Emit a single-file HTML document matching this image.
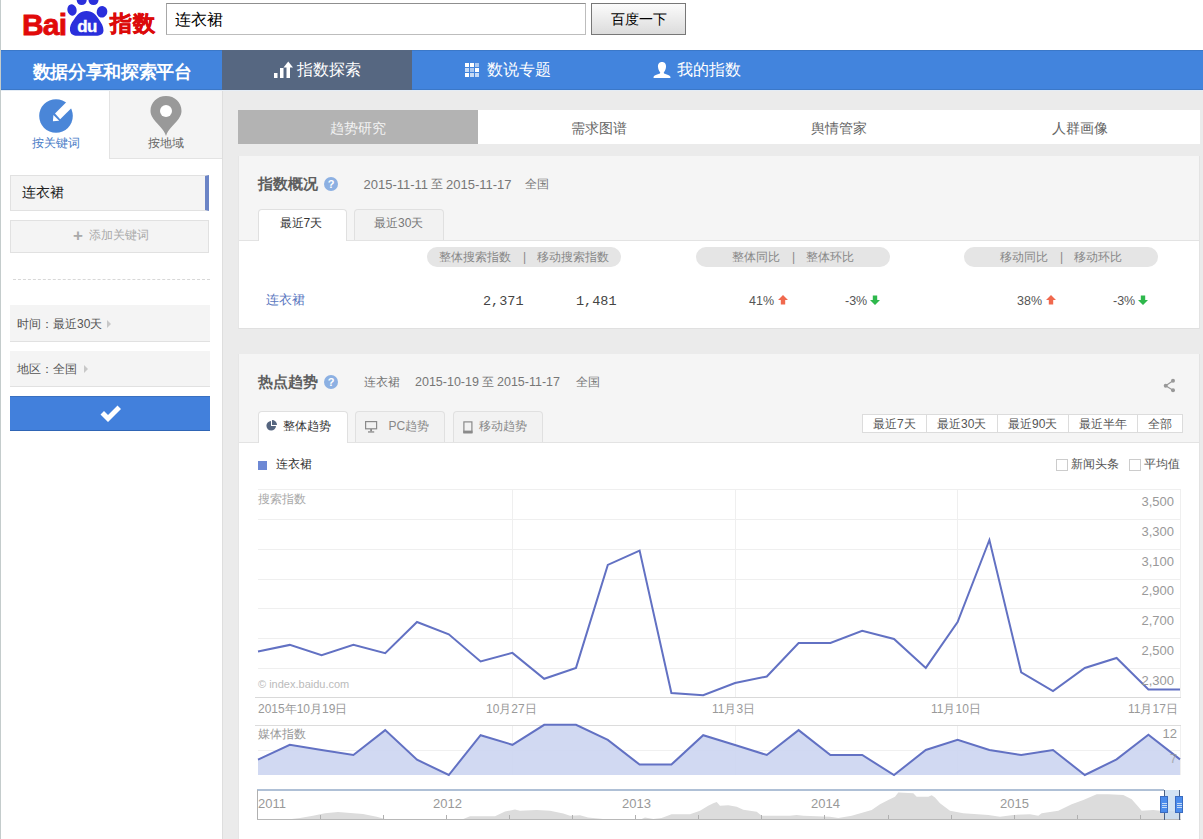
<!DOCTYPE html>
<html><head><meta charset="utf-8">
<style>
*{box-sizing:border-box;margin:0;padding:0}
html,body{width:1203px;height:839px;overflow:hidden;background:#fff;font-family:"Liberation Sans",sans-serif;color:#333}
.a{position:absolute;white-space:nowrap}
.t12{font-size:12px;line-height:14px}
.t13{font-size:13px;line-height:15px}
.t14{font-size:14px;line-height:16px}
.g{color:#999}
</style></head><body>
<!-- page left border -->
<div class="a" style="left:0;top:0;width:1px;height:839px;background:#c4cccc"></div>

<!-- ===== header ===== -->
<svg class="a" style="left:20px;top:0" width="140" height="40" viewBox="0 0 140 40">
  <text x="2" y="35" font-family="Liberation Sans" font-weight="bold" font-size="30" fill="#e10a0a" stroke="#e10a0a" stroke-width="0.8" letter-spacing="-0.8">Bai</text>
  <ellipse cx="52" cy="10" rx="4.6" ry="5.7" fill="#2a2fdc" transform="rotate(-15 52 10)"/>
  <ellipse cx="61.7" cy="0.3" rx="5" ry="4.8" fill="#2a2fdc"/>
  <ellipse cx="73.5" cy="0.3" rx="5" ry="4.8" fill="#2a2fdc"/>
  <ellipse cx="82" cy="11.8" rx="5.3" ry="5.8" fill="#2a2fdc" transform="rotate(15 82 11.8)"/>
  <path d="M66.5 11 C60 11 57 15 54 19.5 C51 23.5 49.5 26.5 50 30.5 C50.5 34.5 53.5 35.7 57 35.7 L76 35.7 C80 35.7 83.5 34.5 83.5 30.5 C83.5 26.5 81.5 23 79 19.5 C76 15 73 11 66.5 11 Z" fill="#2a2fdc"/>
  <text x="55.5" y="32" font-family="Liberation Sans" font-weight="bold" font-size="16.5" fill="#fff" stroke="#fff" stroke-width="0.3" transform="scale(1.03 1)" letter-spacing="-0.6">du</text>
  <text x="90" y="31" font-weight="900" font-size="21.5" fill="#dc0a0a" stroke="#dc0a0a" stroke-width="0.6" letter-spacing="0.5">指数</text>
</svg>
<div class="a" style="left:166px;top:3px;width:420px;height:32px;border:1px solid #bdbdbd;border-top-color:#8f8f8f;border-left-color:#a8a8a8;background:#fff"></div>
<div class="a" style="left:175px;top:9.5px;font-size:16px;line-height:19px;color:#000">连衣裙</div>
<div class="a" style="left:591px;top:3px;width:95px;height:32px;border:1px solid #777;background:linear-gradient(#fbfbfb,#dcdcdc);font-size:14px;text-align:center;line-height:30px;color:#000">百度一下</div>

<!-- ===== nav ===== -->
<div class="a" style="left:1px;top:50px;width:1202px;height:40px;background:#4284dd;border-top:1px solid #3b78c8;border-bottom:1px solid #3b78c8"></div>
<div class="a" style="left:1px;top:90px;width:1202px;height:1px;background:#e4ecf5"></div>
<div class="a" style="left:32.5px;top:61px;font-size:18px;line-height:22px;color:#fff;font-weight:bold;letter-spacing:-0.3px">数据分享和探索平台</div>
<div class="a" style="left:222px;top:50px;width:190px;height:40px;background:#566781"></div>
<svg class="a" style="left:273px;top:60px" width="20" height="19" viewBox="0 0 20 19">
  <rect x="1" y="13" width="3.5" height="5" fill="#fff"/>
  <rect x="7" y="8" width="3.5" height="10" fill="#fff"/>
  <rect x="13.5" y="6" width="3.5" height="12" fill="#fff"/>
  <path d="M10.5 7.5 L15.25 1.5 L20 7.5Z" fill="#fff"/>
</svg>
<div class="a" style="left:297px;top:60px;font-size:16px;line-height:20px;color:#fff">指数探索</div>
<svg class="a" style="left:465px;top:63px" width="15" height="15" viewBox="0 0 15 15">
  <g fill="#fff"><rect x="0" y="0" width="4" height="4"/><rect x="5" y="0" width="4" height="4"/><rect x="10" y="0" width="4" height="4" opacity=".55"/>
  <rect x="0" y="5" width="4" height="4" opacity=".7"/><rect x="5" y="5" width="4" height="4" opacity=".55"/><rect x="10" y="5" width="4" height="4"/>
  <rect x="0" y="10" width="4" height="4"/><rect x="5" y="10" width="4" height="4" opacity=".7"/><rect x="10" y="10" width="4" height="4" opacity=".7"/></g>
</svg>
<div class="a" style="left:487px;top:60px;font-size:16px;line-height:20px;color:#fff">数说专题</div>
<svg class="a" style="left:653px;top:62px" width="18" height="17" viewBox="0 0 18 17">
  <path d="M9 0 C12 0 13.3 2.2 13 5 C12.8 7.5 11.7 9.4 10.8 10.3 L11 11.4 C13.5 12.4 17 13.3 17.3 14.5 L17.5 16 L0.5 16 L0.7 14.5 C1 13.3 4.5 12.4 7 11.4 L7.2 10.3 C6.3 9.4 5.2 7.5 5 5 C4.7 2.2 6 0 9 0Z" fill="#fff"/>
</svg>
<div class="a" style="left:677px;top:60px;font-size:16px;line-height:20px;color:#fff">我的指数</div>

<!-- ===== sidebar ===== -->
<div class="a" style="left:222px;top:91px;width:1px;height:748px;background:#dedede"></div>
<div class="a" style="left:223px;top:91px;width:980px;height:748px;background:#ebebeb"></div>
<!-- tab2 bg -->
<div class="a" style="left:109px;top:91px;width:113px;height:68px;background:#f4f4f4;border-left:1px solid #e3e3e3;border-bottom:1px solid #e3e3e3"></div>
<svg class="a" style="left:38px;top:98px" width="36" height="36" viewBox="0 0 36 36">
  <circle cx="18" cy="18" r="16.8" fill="#4a86d8"/>
  <path d="M17 15.4 L30.5 1.9 L36 7.4 L22.2 21.2Z" fill="#fff"/>
  <path d="M15.4 17 L21.2 22.8 L14.9 23.3Z" fill="#fff"/>
</svg>
<div class="a t12" style="left:32px;top:136px;color:#4a7cc7">按关键词</div>
<svg class="a" style="left:149px;top:95px" width="34" height="42" viewBox="0 0 34 42">
  <path d="M17 41 C15 34 9 30 4.5 24 C2 20.5 1.5 18 1.5 16 C1.5 7.3 8.3 1 17 1 C25.7 1 32.5 7.3 32.5 16 C32.5 18 32 20.5 29.5 24 C25 30 19 34 17 41Z" fill="#999"/>
  <circle cx="17" cy="16" r="6" fill="#fff"/>
</svg>
<div class="a t12" style="left:148px;top:136px;color:#666">按地域</div>

<!-- keyword box -->
<div class="a" style="left:10px;top:175px;width:199px;height:36px;background:#f4f4f4;border:1px solid #e1e1e1;border-right:4px solid #6b84c6"></div>
<div class="a t14" style="left:22px;top:184px;color:#222">连衣裙</div>
<div class="a" style="left:10px;top:220px;width:199px;height:33px;background:#f4f4f4;border:1px solid #e1e1e1"></div>
<div class="a" style="left:73px;top:227px;font-size:17px;line-height:17px;color:#aaa;font-weight:bold">+</div>
<div class="a t12" style="left:89px;top:228px;color:#aaa">添加关键词</div>
<div class="a" style="left:13px;top:279px;width:197px;height:0;border-top:1px dashed #d8d8d8"></div>

<div class="a" style="left:10px;top:305px;width:200px;height:37px;background:#f4f4f4;border-bottom:1px solid #e1e1e1"></div>
<div class="a t12" style="left:17px;top:317px;color:#555">时间：最近30天</div>
<div class="a" style="left:107px;top:320px;width:0;height:0;border-left:4px solid #c8c8c8;border-top:4px solid transparent;border-bottom:4px solid transparent"></div>
<div class="a" style="left:10px;top:351px;width:200px;height:36px;background:#f4f4f4;border-bottom:1px solid #e1e1e1"></div>
<div class="a t12" style="left:17px;top:362px;color:#555">地区：全国</div>
<div class="a" style="left:84px;top:365px;width:0;height:0;border-left:4px solid #c8c8c8;border-top:4px solid transparent;border-bottom:4px solid transparent"></div>
<div class="a" style="left:10px;top:396px;width:200px;height:35px;background:#4280dc;border-top:1px solid #3a70c0;border-bottom:1px solid #2f65b5"></div>
<svg class="a" style="left:99px;top:404px" width="23" height="20" viewBox="0 0 23 20">
  <path d="M1.5 10.5 L5 7 L9 11 L18.5 1.5 L22 5 L9 18Z" fill="#fff"/>
</svg>

<!-- ===== main tabs ===== -->
<div class="a" style="left:238px;top:110px;width:240px;height:34px;background:#b3b3b3"></div>
<div class="a t14" style="left:330px;top:120px;color:#f2f2f2">趋势研究</div>
<div class="a" style="left:478px;top:110px;width:722px;height:34px;background:#fff"></div>
<div class="a t14" style="left:571px;top:120px;color:#666">需求图谱</div>
<div class="a t14" style="left:811px;top:120px;color:#666">舆情管家</div>
<div class="a t14" style="left:1052px;top:120px;color:#666">人群画像</div>

<!-- ===== panel 1 ===== -->
<div class="a" style="left:238px;top:156px;width:962px;height:173px;background:#f5f5f5;border-left:1px solid #e6e6e6;border-right:1px solid #e3e3e3;border-bottom:1px solid #e0e0e0"></div>
<div class="a" style="left:239px;top:240px;width:960px;height:88px;background:#fff;border-top:1px solid #e3e3e3"></div>
<div class="a" style="left:258px;top:175px;font-size:15px;line-height:17px;color:#5e5e5e;font-weight:bold">指数概况</div>
<div class="a" style="left:324px;top:177px;width:14px;height:14px;border-radius:50%;background:#8cb0e2;color:#fff;font-size:11px;line-height:14px;text-align:center;font-weight:bold">?</div>
<div class="a" style="left:363.5px;top:177px;font-size:13px;line-height:15px;color:#777">2015-11-11</div>
<div class="a t12" style="left:430.5px;top:177px;color:#777">至</div>
<div class="a" style="left:446px;top:177px;font-size:13px;line-height:15px;color:#777">2015-11-17</div>
<div class="a t12" style="left:525px;top:177px;color:#777">全国</div>
<div class="a" style="left:258px;top:209px;width:89px;height:32px;background:#fff;border:1px solid #e0e0e0;border-bottom:none;border-radius:4px 4px 0 0"></div>
<div class="a t12" style="left:279.5px;top:216px;color:#333">最近7天</div>
<div class="a" style="left:354px;top:209px;width:90px;height:31px;background:#f2f2f2;border:1px solid #e0e0e0;border-bottom:none;border-radius:4px 4px 0 0"></div>
<div class="a t12" style="left:374px;top:216px;color:#777">最近30天</div>

<div class="a t12" style="left:427px;top:247px;width:194px;height:20px;border-radius:10px;background:#e5e5e5;line-height:20px;color:#888;display:flex;justify-content:center"><span>整体搜索指数</span><span style="margin:0 11px 0 12px">|</span><span>移动搜索指数</span></div>
<div class="a t12" style="left:696px;top:247px;width:194px;height:20px;border-radius:10px;background:#e5e5e5;line-height:20px;color:#888;display:flex;justify-content:center"><span>整体同比</span><span style="margin:0 11px 0 12px">|</span><span>整体环比</span></div>
<div class="a t12" style="left:964px;top:247px;width:194px;height:20px;border-radius:10px;background:#e5e5e5;line-height:20px;color:#888;display:flex;justify-content:center"><span>移动同比</span><span style="margin:0 11px 0 12px">|</span><span>移动环比</span></div>
<div class="a t13" style="left:266px;top:292px;color:#5b78bf">连衣裙</div>
<div class="a" style="left:483px;top:293.5px;font-family:'Liberation Mono',monospace;font-size:13.5px;line-height:16px;color:#444">2,371</div>
<div class="a" style="left:576px;top:293.5px;font-family:'Liberation Mono',monospace;font-size:13.5px;line-height:16px;color:#444">1,481</div>
<div class="a" style="left:749px;top:294px;font-size:12.5px;line-height:14px;color:#555">41%</div>
<div class="a" style="left:845px;top:294px;font-size:12.5px;line-height:14px;color:#555">-3%</div>
<div class="a" style="left:1017px;top:294px;font-size:12.5px;line-height:14px;color:#555">38%</div>
<div class="a" style="left:1113px;top:294px;font-size:12.5px;line-height:14px;color:#555">-3%</div>
<svg class="a" style="left:778px;top:294.5px" width="10" height="10" viewBox="0 0 10 10"><path d="M5 0 L10 5 L7.2 5 L7.2 9.5 L2.8 9.5 L2.8 5 L0 5Z" fill="#f0694e"/></svg>
<svg class="a" style="left:1046px;top:294.5px" width="10" height="10" viewBox="0 0 10 10"><path d="M5 0 L10 5 L7.2 5 L7.2 9.5 L2.8 9.5 L2.8 5 L0 5Z" fill="#f0694e"/></svg>
<svg class="a" style="left:870px;top:295px" width="10" height="10" viewBox="0 0 10 10"><path d="M5 10 L10 5 L7.2 5 L7.2 0.5 L2.8 0.5 L2.8 5 L0 5Z" fill="#2eb84c"/></svg>
<svg class="a" style="left:1138px;top:295px" width="10" height="10" viewBox="0 0 10 10"><path d="M5 10 L10 5 L7.2 5 L7.2 0.5 L2.8 0.5 L2.8 5 L0 5Z" fill="#2eb84c"/></svg>

<!-- ===== panel 2 ===== -->
<div class="a" style="left:238px;top:354px;width:962px;height:485px;background:#f5f5f5;border-left:1px solid #e6e6e6;border-right:1px solid #e3e3e3"></div>
<div class="a" style="left:239px;top:442px;width:960px;height:397px;background:#fff;border-top:1px solid #e3e3e3"></div>
<div class="a" style="left:258px;top:373px;font-size:15px;line-height:17px;color:#5e5e5e;font-weight:bold">热点趋势</div>
<div class="a" style="left:324px;top:375px;width:14px;height:14px;border-radius:50%;background:#8cb0e2;color:#fff;font-size:11px;line-height:14px;text-align:center;font-weight:bold">?</div>
<div class="a t12" style="left:363.5px;top:375px;color:#777">连衣裙</div>
<div class="a" style="left:415px;top:375px;font-size:12.5px;line-height:15px;color:#777">2015-10-19</div>
<div class="a t12" style="left:481.5px;top:375px;color:#777">至</div>
<div class="a" style="left:497px;top:375px;font-size:12.5px;line-height:15px;color:#777">2015-11-17</div>
<div class="a t12" style="left:576px;top:375px;color:#777">全国</div>
<svg class="a" style="left:1163px;top:378px" width="13" height="16" viewBox="0 0 13 16">
  <g fill="#999"><circle cx="10" cy="2.7" r="2"/><circle cx="2.7" cy="7.7" r="2"/><circle cx="10" cy="12.2" r="2"/></g>
  <path d="M10 2.7 L2.7 7.7 L10 12.2" stroke="#999" stroke-width="1.2" fill="none"/>
</svg>
<!-- chart tabs -->
<div class="a" style="left:258px;top:411px;width:90px;height:32px;background:#fff;border:1px solid #e0e0e0;border-bottom:none;border-radius:4px 4px 0 0"></div>
<svg class="a" style="left:266px;top:420px" width="11" height="11" viewBox="0 0 11 11"><path d="M5 1 A4.8 4.8 0 1 0 10 6 L5 6Z" fill="#55657f"/><path d="M6 0 A5 5 0 0 1 11 5 L6 5Z" fill="#55657f"/></svg>
<div class="a t12" style="left:282.5px;top:419px;color:#333">整体趋势</div>
<div class="a" style="left:355px;top:411px;width:90px;height:31px;background:#f2f2f2;border:1px solid #e0e0e0;border-bottom:none;border-radius:4px 4px 0 0"></div>
<svg class="a" style="left:364px;top:420px" width="14" height="13" viewBox="0 0 14 13"><rect x="1.6" y="1.6" width="11" height="7.2" fill="none" stroke="#8a8a8a" stroke-width="1.2"/><rect x="6.2" y="9" width="1.8" height="2.4" fill="#8a8a8a"/><rect x="4" y="11.3" width="6.2" height="1.3" fill="#8a8a8a"/></svg>
<div class="a t12" style="left:388.5px;top:419px;color:#888">PC趋势</div>
<div class="a" style="left:453px;top:411px;width:90px;height:31px;background:#f2f2f2;border:1px solid #e0e0e0;border-bottom:none;border-radius:4px 4px 0 0"></div>
<svg class="a" style="left:462px;top:421px" width="11" height="13" viewBox="0 0 11 13"><rect x="1.9" y="0.9" width="8" height="11" fill="none" stroke="#8a8a8a" stroke-width="1.2"/><rect x="1.3" y="9.6" width="9.2" height="2.4" fill="#8a8a8a"/></svg>
<div class="a t12" style="left:478.5px;top:419px;color:#888">移动趋势</div>
<!-- time range buttons -->
<div class="a" style="left:862px;top:414px;width:321px;height:19px;background:#fff;border:1px solid #dcdcdc"></div>
<div class="a" style="left:926px;top:414px;width:1px;height:19px;background:#dcdcdc"></div>
<div class="a" style="left:997px;top:414px;width:1px;height:19px;background:#dcdcdc"></div>
<div class="a" style="left:1068px;top:414px;width:1px;height:19px;background:#dcdcdc"></div>
<div class="a" style="left:1137px;top:414px;width:1px;height:19px;background:#dcdcdc"></div>
<div class="a t12" style="left:873px;top:417px;color:#555">最近7天</div>
<div class="a t12" style="left:937px;top:417px;color:#555">最近30天</div>
<div class="a t12" style="left:1008px;top:417px;color:#555">最近90天</div>
<div class="a t12" style="left:1079px;top:417px;color:#555">最近半年</div>
<div class="a t12" style="left:1148px;top:417px;color:#555">全部</div>

<!-- legend -->
<div class="a" style="left:258px;top:461px;width:9px;height:9px;background:#6d88d4"></div>
<div class="a t12" style="left:276px;top:457px;color:#333">连衣裙</div>
<div class="a" style="left:1056px;top:459px;width:12px;height:12px;border:1px solid #ccc;background:#fff"></div>
<div class="a t12" style="left:1071px;top:457px;color:#555">新闻头条</div>
<div class="a" style="left:1129px;top:459px;width:12px;height:12px;border:1px solid #ccc;background:#fff"></div>
<div class="a t12" style="left:1144px;top:457px;color:#555">平均值</div>

<!-- ===== charts ===== -->
<svg class="a" style="left:0;top:0" width="1203" height="839" viewBox="0 0 1203 839">
  <!-- search chart grid -->
  <g stroke="#efefef" stroke-width="1" shape-rendering="crispEdges">
    <line x1="258" y1="489.5" x2="1180" y2="489.5"/>
    <line x1="258" y1="519.5" x2="1180" y2="519.5"/>
    <line x1="258" y1="549.5" x2="1180" y2="549.5"/>
    <line x1="258" y1="579.5" x2="1180" y2="579.5"/>
    <line x1="258" y1="608.5" x2="1180" y2="608.5"/>
    <line x1="258" y1="638.5" x2="1180" y2="638.5"/>
    <line x1="258" y1="668.5" x2="1180" y2="668.5"/>
    <line x1="512.5" y1="489" x2="512.5" y2="698"/>
    <line x1="735.5" y1="489" x2="735.5" y2="698"/>
    <line x1="957.5" y1="489" x2="957.5" y2="698"/>
    <line x1="1180.5" y1="489" x2="1180.5" y2="698"/>
  </g>
  <line x1="255" y1="697.5" x2="1181" y2="697.5" stroke="#d9d9d9" stroke-width="1" shape-rendering="crispEdges"/>
  <polyline fill="none" stroke="#6271c3" stroke-width="2" stroke-linejoin="miter"
    points="258,651.6 289.8,644.9 321.6,655.1 353.4,644.9 385.2,653.2 417,622 448.8,634.3 480.6,661.4 512.4,652.9 544.2,678.8 576,667.9 607.8,564.9 639.6,550.6 671.4,693 703.2,695.3 735,683 766.8,676.5 798.6,643 830.4,643 862.2,630.7 894,639 925.8,667.9 957.6,622 989.4,540 1021.2,672.3 1053,691 1084.8,668 1116.6,658 1148.4,689.5 1180,689.5"/>

  <!-- media chart -->
  <line x1="255" y1="725.5" x2="1181" y2="725.5" stroke="#dcdcdc" stroke-width="1" shape-rendering="crispEdges"/>
  <g stroke="#f0f0f0" stroke-width="1" shape-rendering="crispEdges">
    <line x1="258" y1="750.5" x2="1180" y2="750.5"/>
    <line x1="512.5" y1="726" x2="512.5" y2="775"/>
    <line x1="735.5" y1="726" x2="735.5" y2="775"/>
    <line x1="957.5" y1="726" x2="957.5" y2="775"/>
    <line x1="1180.5" y1="726" x2="1180.5" y2="775"/>
  </g>
  <polygon fill="#ccd5f1" fill-opacity="0.9"
    points="258,775 258,759.7 289.8,744.8 321.6,749.9 353.4,755 385.2,730.1 417,759.7 448.8,775 480.6,735.2 512.4,744.8 544.2,724.8 576,724.8 607.8,739.9 639.6,764.6 671.4,764.6 703.2,735.2 735,745 766.8,755 798.6,730.1 830.4,755 862.2,755 894,775 925.8,750 957.6,739.9 989.4,750 1021.2,755 1053,750 1084.8,775 1116.6,759.4 1148.4,734.8 1180,759.4 1180,775"/>
  <polyline fill="none" stroke="#6271c3" stroke-width="2" stroke-linejoin="miter"
    points="258,759.7 289.8,744.8 321.6,749.9 353.4,755 385.2,730.1 417,759.7 448.8,775 480.6,735.2 512.4,744.8 544.2,724.8 576,724.8 607.8,739.9 639.6,764.6 671.4,764.6 703.2,735.2 735,745 766.8,755 798.6,730.1 830.4,755 862.2,755 894,775 925.8,750 957.6,739.9 989.4,750 1021.2,755 1053,750 1084.8,775 1116.6,759.4 1148.4,734.8 1180,759.4"/>

  <!-- navigator -->
  <path fill="#dcdcdc" d="M257,819 L291.6,819 L300,818 L313,815.8 L325,813.3 L338,812 L363,814 L376.7,816.7 L385,819 L463.3,819 L470,816.3 L495,816.3 L505,811.6 L515,809.6 L520,810.8 L536.7,810 L550,810.8 L563.3,813.6 L570,815.8 L580,815.3 L588,817.5 L603,819 L641.7,819 L645,817.5 L653.3,819 L661.6,818 L671.6,814.2 L690,814.2 L700,810.8 L708.2,805.8 L713.3,803.3 L716.7,802 L720,805.8 L728.3,805.3 L736.7,806.7 L743.3,809.7 L756.7,811.7 L761.7,815.8 L790,815.8 L796.7,815 L803.3,815.8 L830,816.7 L838.3,818 L851.7,815.8 L871.7,810 L880,804.2 L888.3,800 L895,796.7 L898.3,792.5 L913.3,793.3 L916.7,796.7 L928.3,796.7 L931.7,795.3 L935,797.5 L940,803.3 L950,810.8 L963.3,813.3 L988.3,815 L1000,816.7 L1013.3,815 L1030,814.2 L1038.3,815.8 L1041.7,813.3 L1058.3,810.8 L1071.7,804.2 L1083.3,800 L1096.7,794.2 L1108.3,794.2 L1123.3,795 L1131.7,799.2 L1138.3,806.7 L1141.7,810.8 L1153.3,810 L1160,810.8 L1181,811 L1181,819Z"/>
  <line x1="257" y1="790" x2="1164" y2="790" stroke="#95abc9" stroke-width="1.6"/>
  <rect x="1164" y="790" width="16" height="29" fill="#c7dcf0" fill-opacity="0.8"/>
  <line x1="257" y1="819.5" x2="1181" y2="819.5" stroke="#b8b8b8" stroke-width="1" shape-rendering="crispEdges"/>
  <g stroke="#b0b0b0" stroke-width="1" shape-rendering="crispEdges">
    <line x1="257.5" y1="790" x2="257.5" y2="819"/>
    <line x1="320.5" y1="815" x2="320.5" y2="819"/>
    <line x1="383.5" y1="815" x2="383.5" y2="819"/>
    <line x1="446.5" y1="815" x2="446.5" y2="819"/>
    <line x1="509.5" y1="815" x2="509.5" y2="819"/>
    <line x1="572.5" y1="815" x2="572.5" y2="819"/>
    <line x1="635.5" y1="815" x2="635.5" y2="819"/>
    <line x1="698.5" y1="815" x2="698.5" y2="819"/>
    <line x1="761.5" y1="815" x2="761.5" y2="819"/>
    <line x1="824.5" y1="815" x2="824.5" y2="819"/>
    <line x1="888.5" y1="815" x2="888.5" y2="819"/>
    <line x1="951.5" y1="815" x2="951.5" y2="819"/>
    <line x1="1014.5" y1="815" x2="1014.5" y2="819"/>
    <line x1="1077.5" y1="815" x2="1077.5" y2="819"/>
    <line x1="1140.5" y1="815" x2="1140.5" y2="819"/>
  </g>
  <g stroke="#4a6184" stroke-width="1" shape-rendering="crispEdges">
    <line x1="1164.5" y1="790" x2="1164.5" y2="820"/>
    <line x1="1179.5" y1="790" x2="1179.5" y2="820"/>
  </g>
  <rect x="1160.5" y="796.5" width="7" height="16" fill="#4b8cec" stroke="#3a6cc0"/>
  <rect x="1175.5" y="796.5" width="7" height="16" fill="#4b8cec" stroke="#3a6cc0"/>
  <g stroke="#c5dbf5" stroke-width="1" shape-rendering="crispEdges">
    <line x1="1162" y1="803.5" x2="1167" y2="803.5"/><line x1="1162" y1="805.5" x2="1167" y2="805.5"/><line x1="1162" y1="807.5" x2="1167" y2="807.5"/>
    <line x1="1177" y1="803.5" x2="1182" y2="803.5"/><line x1="1177" y1="805.5" x2="1182" y2="805.5"/><line x1="1177" y1="807.5" x2="1182" y2="807.5"/>
  </g>
</svg>

<!-- chart labels -->
<div class="a t12" style="left:258px;top:492px;color:#aaa">搜索指数</div>
<div class="a" style="left:258px;top:678px;font-size:11px;line-height:12px;color:#bbb">© index.baidu.com</div>
<div class="a" style="right:29px;top:495px;font-size:13px;line-height:14px;color:#999;text-align:right">3,500</div>
<div class="a" style="right:29px;top:525px;font-size:13px;line-height:14px;color:#999;text-align:right">3,300</div>
<div class="a" style="right:29px;top:555px;font-size:13px;line-height:14px;color:#999;text-align:right">3,100</div>
<div class="a" style="right:29px;top:584px;font-size:13px;line-height:14px;color:#999;text-align:right">2,900</div>
<div class="a" style="right:29px;top:614px;font-size:13px;line-height:14px;color:#999;text-align:right">2,700</div>
<div class="a" style="right:29px;top:644px;font-size:13px;line-height:14px;color:#999;text-align:right">2,500</div>
<div class="a" style="right:29px;top:674px;font-size:13px;line-height:14px;color:#999;text-align:right">2,300</div>
<div class="a t12" style="left:258px;top:702px;color:#999">2015年10月19日</div>
<div class="a t12" style="left:486px;top:702px;color:#999">10月27日</div>
<div class="a t12" style="left:712px;top:702px;color:#999">11月3日</div>
<div class="a t12" style="left:931px;top:702px;color:#999">11月10日</div>
<div class="a t12" style="left:1128px;top:702px;color:#999">11月17日</div>
<div class="a t12" style="left:258px;top:727px;color:#999">媒体指数</div>
<div class="a" style="right:26px;top:727px;font-size:13px;line-height:14px;color:#999">12</div>
<div class="a" style="right:26px;top:752px;font-size:13px;line-height:14px;color:#999;opacity:.7">7</div>
<div class="a" style="left:258px;top:797px;font-size:13px;line-height:14px;color:#999">2011</div>
<div class="a" style="left:433px;top:797px;font-size:13px;line-height:14px;color:#999">2012</div>
<div class="a" style="left:622px;top:797px;font-size:13px;line-height:14px;color:#999">2013</div>
<div class="a" style="left:811px;top:797px;font-size:13px;line-height:14px;color:#999">2014</div>
<div class="a" style="left:1000px;top:797px;font-size:13px;line-height:14px;color:#999">2015</div>
</body></html>
